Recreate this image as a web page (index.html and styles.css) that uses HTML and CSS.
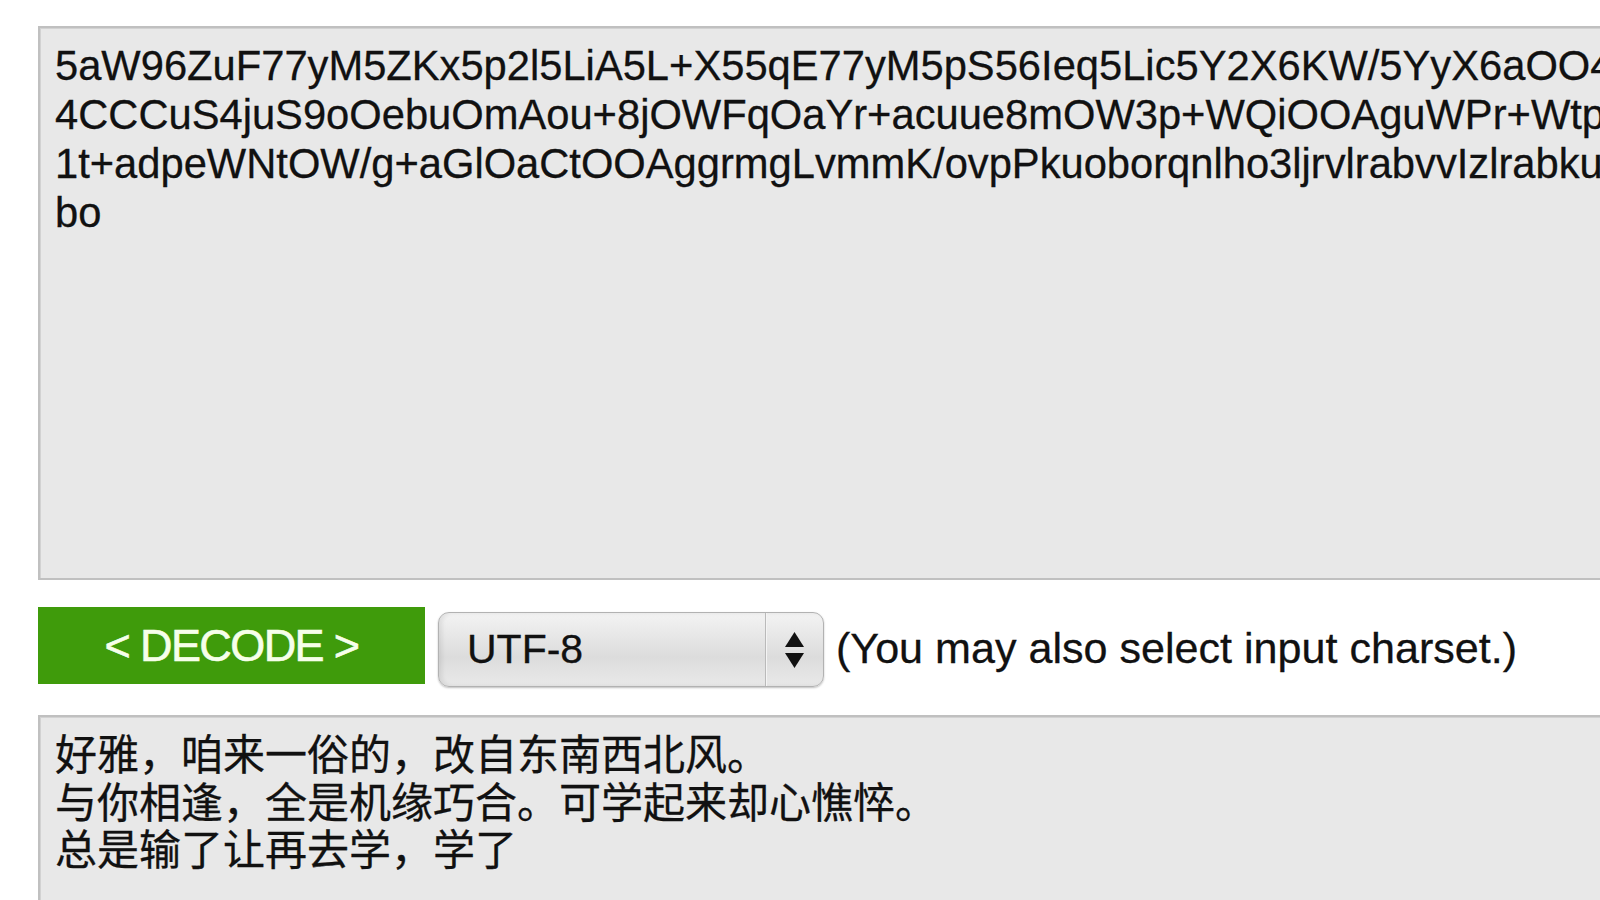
FILE: index.html
```html
<!DOCTYPE html>
<html lang="zh">
<head>
<meta charset="utf-8">
<title>Base64 Decode</title>
<link rel="stylesheet" href="styles.css">
</head>
<body>
<div class="page">
  <div class="field input-area">
    <div class="line">5aW96ZuF77yM5ZKx5p2l5LiA5L+X55qE77yM5pS56Ieq5Lic5Y2X6KW/5YyX6aOO4</div>
    <div class="line">4CCCuS4juS9oOebuOmAou+8jOWFqOaYr+acuue8mOW3p+WQiOOAguWPr+Wtpui</div>
    <div class="line">1t+adpeWNtOW/g+aGlOaCtOOAggrmgLvmmK/ovpPkuoborqnlho3ljrvlrabvvIzlrabku</div>
    <div class="line">bo</div>
  </div>

  <div class="controls">
    <div class="decode-btn">&lt; DECODE &gt;</div>
    <div class="select">
      <span class="select-value">UTF-8</span>
      <span class="select-arrows">
        <svg width="19" height="36" viewBox="0 0 19 36">
          <polygon points="9.5,0 19,15 0,15" fill="#111"/>
          <polygon points="0,21 19,21 9.5,36" fill="#111"/>
        </svg>
      </span>
    </div>
    <span class="hint">(You may also select input charset.)</span>
  </div>

  <div class="field output-area">
    <div class="line">好雅，咱来一俗的，改自东南西北风。</div>
    <div class="line">与你相逢，全是机缘巧合。可学起来却心憔悴。</div>
    <div class="line">总是输了让再去学，学了</div>
  </div>
</div>
</body>
</html>
```

FILE: styles.css
```css
html, body {
  margin: 0;
  padding: 0;
  overflow: hidden;
  background: #ffffff;
}

.page {
  width: 1800px;
  padding: 26px 0 0 38px;
  font-family: "Liberation Sans", Arial, Helvetica, sans-serif;
  color: #111;
  -webkit-text-stroke: 0.3px currentColor;
}

.field {
  box-sizing: border-box;
  width: 1700px;
  background: #e8e8e8;
  border: 2px solid #c0c0c0;
  box-shadow: inset 1px 1px 0 #d2d2d2;
  overflow: hidden;
}

.line {
  white-space: pre;
}

.input-area {
  height: 554px;
  padding: 13px 15px;
  font-size: 41.7px;
  line-height: 49px;
}

.controls {
  display: flex;
  align-items: flex-start;
  gap: 13px;
  height: 80px;
  margin-top: 27px;
}

.decode-btn {
  width: 387px;
  height: 77px;
  background: #3f9b0b;
  color: #f6ffea;
  font-size: 45px;
  letter-spacing: -1.6px;
  display: flex;
  align-items: center;
  justify-content: center;
  white-space: nowrap;
  -webkit-text-stroke: 0.6px currentColor;
}

.select {
  box-sizing: border-box;
  margin-top: 5px;
  width: 386px;
  height: 75px;
  display: flex;
  border: 1px solid #b2b2b2;
  border-radius: 11px;
  background: linear-gradient(#f3f3f3 0%, #e2e2e2 45%, #dcdcdc 60%, #e9e9e9 100%);
  box-shadow: 0 1px 2px rgba(0, 0, 0, 0.25), inset 3px 0 4px rgba(0, 0, 0, 0.08);
}

.select-value {
  flex: 1;
  padding-left: 28px;
  font-size: 41px;
  line-height: 73px;
  color: #111;
}

.select-arrows {
  width: 57px;
  display: flex;
  align-items: center;
  justify-content: center;
  border-left: 1px solid #bababa;
  box-shadow: inset 1px 0 0 #f4f4f4;
}

.hint {
  margin-top: 17px;
  margin-left: -1px;
  font-size: 43.1px;
  line-height: 49px;
  white-space: nowrap;
  color: #111;
}

.output-area {
  height: 320px;
  margin-top: 28px;
  padding: 15px 15px 12px;
  font-family: "Liberation Sans", "Noto Sans CJK SC", sans-serif;
  font-size: 42px;
  line-height: 47.5px;
}
```
